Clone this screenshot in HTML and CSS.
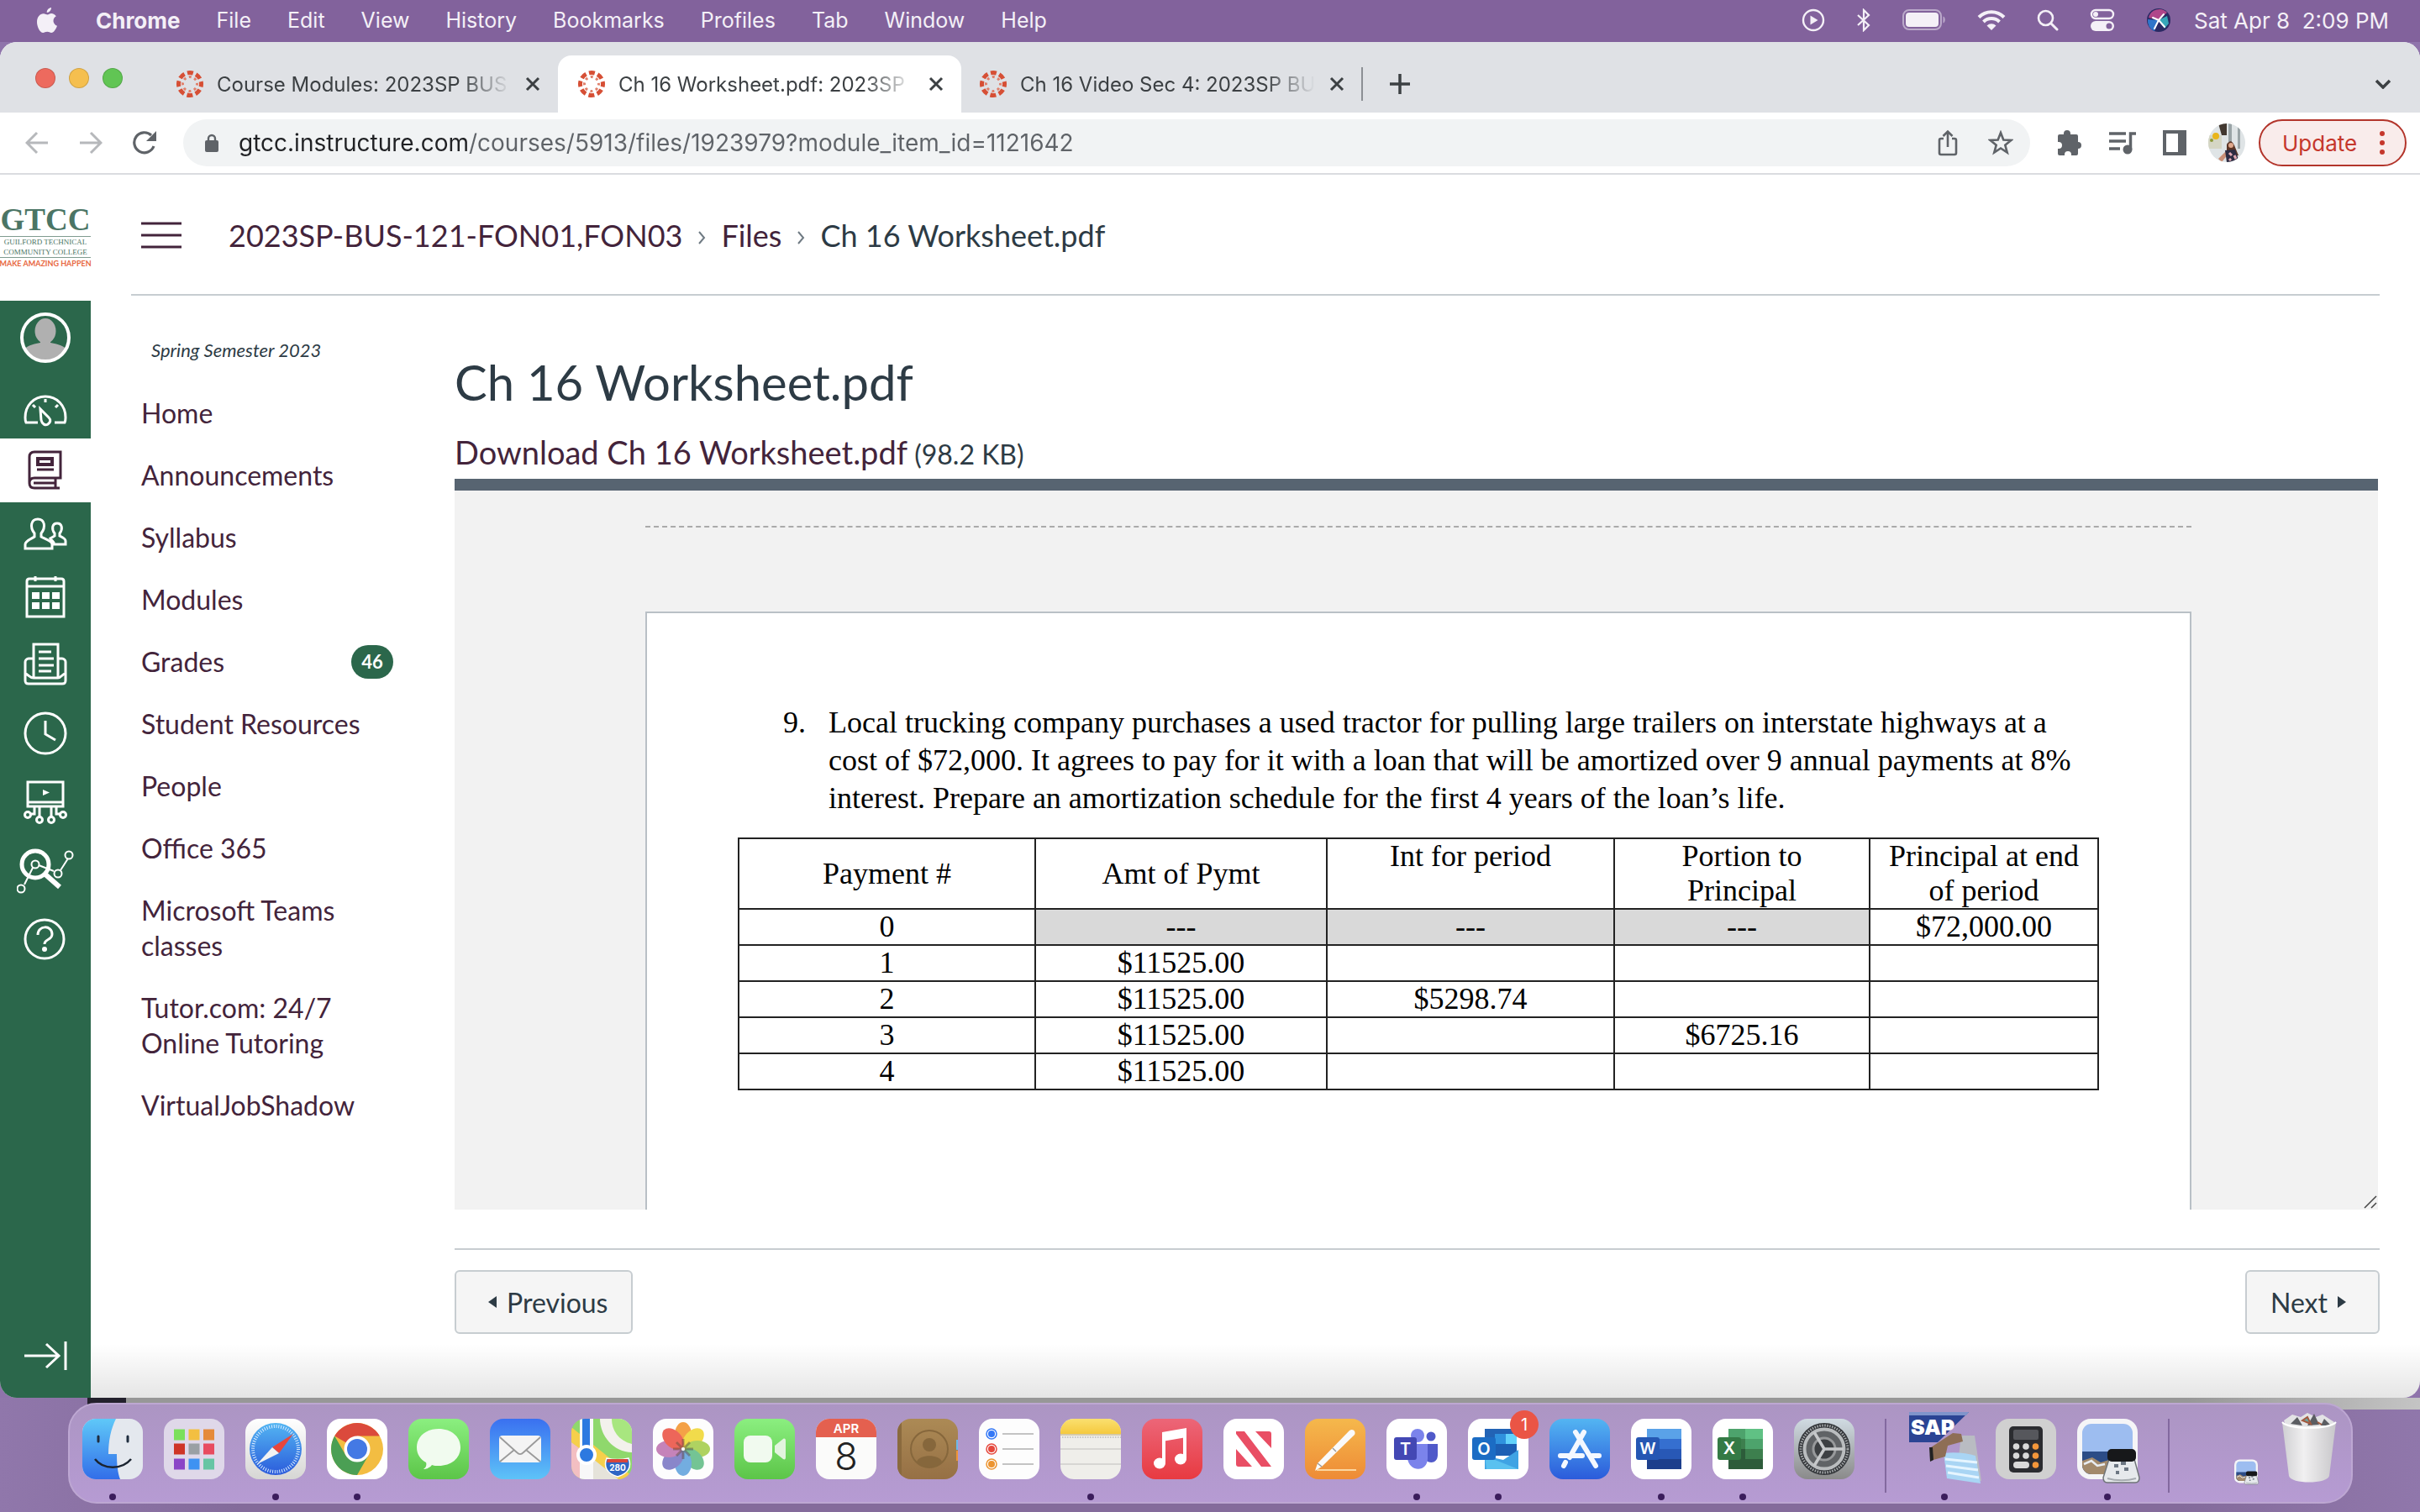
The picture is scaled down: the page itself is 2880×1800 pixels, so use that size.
FILE: index.html
```
<!DOCTYPE html>
<html lang="en">

<head>
  <meta charset="UTF-8">
  <meta name="viewport" content="width=device-width, initial-scale=1.0">
  <title>Ch 16 Worksheet.pdf: 2023SP BUS</title>
  <link rel="stylesheet" href="styles.css">
</head>

<body>
  <!-- Shared symbols and gradients -->
  <svg class="defs" width="0" height="0" aria-hidden="true">
    <symbol id="canvas" viewBox="0 0 32 32">
      <circle cx="16" cy="16" r="13.5" fill="none" stroke="#d64f35" stroke-width="5" stroke-dasharray="7 3.6" stroke-dashoffset="3.5"/>
      <circle cx="16" cy="16" r="8.5" fill="none" stroke="#e0806c" stroke-width="3" stroke-dasharray="3 3.676" stroke-dashoffset="1.5"/>
    </symbol>
    <symbol id="close" viewBox="0 0 20 20">
      <path d="M3 3l14 14M17 3L3 17" stroke="#3c4043" stroke-width="3" fill="none"/>
    </symbol>
    <linearGradient id="sky" x2="0" y2="1"><stop stop-color="#5fc8f8"/><stop offset="1" stop-color="#326ee9"/></linearGradient>
    <linearGradient id="blue" x2="0" y2="1"><stop stop-color="#3a70f0"/><stop offset="1" stop-color="#5ec3f8"/></linearGradient>
    <linearGradient id="store" x2="0" y2="1"><stop stop-color="#53b5f2"/><stop offset="1" stop-color="#2b5bdb"/></linearGradient>
    <linearGradient id="green" x2="0" y2="1"><stop stop-color="#8bef80"/><stop offset="1" stop-color="#5cc548"/></linearGradient>
    <linearGradient id="white" x2="0" y2="1"><stop stop-color="#ffffff"/><stop offset="1" stop-color="#d6d6d4"/></linearGradient>
    <linearGradient id="pink" x2="0" y2="1"><stop stop-color="#ec6678"/><stop offset="1" stop-color="#e83a41"/></linearGradient>
    <linearGradient id="orange" x2="0" y2="1"><stop stop-color="#f5b84c"/><stop offset="1" stop-color="#ee8b36"/></linearGradient>
    <linearGradient id="brown" x2="0" y2="1"><stop stop-color="#ac8a55"/><stop offset="1" stop-color="#967045"/></linearGradient>
    <linearGradient id="yellow" x2="0" y2="1"><stop stop-color="#fae070"/><stop offset="1" stop-color="#f5c93e"/></linearGradient>
    <linearGradient id="steel" x2="0" y2="1"><stop stop-color="#d0dbe2"/><stop offset="1" stop-color="#8a8a8a"/></linearGradient>
    <linearGradient id="bin" x2="1" y2="0"><stop stop-color="#cfcfd2"/><stop offset=".4" stop-color="#f1f0f1"/><stop offset="1" stop-color="#c8c7ca"/></linearGradient>
  </svg>

  <header class="menubar">
    <svg class="apple" viewBox="0 0 26 32"><path d="M18 1c.3 2.600-2.200 6-5.200 6C12.400 4.200 15 1.300 18 1zM18 8c2.400 0 4.600 1.300 5.800 3.200-5 3-4 9.600 1.200 11.600-1.400 4-4 8.200-6.800 8.200-2 0-2.700-1.200-5-1.200S10 31 8.200 31C4.500 31 1 23.800 1 18.200 1 12 4.700 8.300 8.700 8.300c2 0 3.700 1.300 4.900 1.300C14.700 9.600 16.200 8 18 8z" fill="currentColor"/></svg>
    <nav class="menus">
      <strong>Chrome</strong>
      <span>File</span>
      <span>Edit</span>
      <span>View</span>
      <span>History</span>
      <span>Bookmarks</span>
      <span>Profiles</span>
      <span>Tab</span>
      <span>Window</span>
      <span>Help</span>
    </nav>
    <div class="status">
      <svg width="28" height="28" viewBox="0 0 28 28"><circle cx="14" cy="14" r="12" fill="none" stroke="currentColor" stroke-width="2.400"/><path d="M10.500 8.500v11l9-5.500z" fill="currentColor"/></svg>
      <svg width="18" height="28" viewBox="0 0 18 28"><path d="M2 8l13 12-6 6V2l6 6L2 20" fill="none" stroke="currentColor" stroke-width="2.200"/></svg>
      <svg width="52" height="26" viewBox="0 0 52 26"><rect x="1" y="1" width="45" height="23" rx="7" fill="none" stroke="currentColor" stroke-opacity=".5" stroke-width="2"/><rect x="4" y="4" width="39" height="17" rx="4" fill="currentColor"/><path d="M48.500 8.500c3 1 3 7 0 8z" fill="currentColor" fill-opacity=".5"/></svg>
      <svg width="34" height="26" viewBox="0 0 34 26"><path d="M2 9.500a21 21 0 0 1 30 0M7.500 15a13.500 13.500 0 0 1 19 0" fill="none" stroke="currentColor" stroke-width="4"/><path d="M11.500 19.500a8 8 0 0 1 11 0L17 25z" fill="currentColor"/></svg>
      <svg width="26" height="26" viewBox="0 0 26 26"><circle cx="10.500" cy="10.500" r="8.500" fill="none" stroke="currentColor" stroke-width="2.600"/><path d="M17 17l7 7" stroke="currentColor" stroke-width="3" stroke-linecap="round"/></svg>
      <svg width="30" height="28" viewBox="0 0 30 28"><rect x="2" y="2" width="26" height="10" rx="5" fill="none" stroke="currentColor" stroke-width="2.400"/><circle cx="7" cy="7" r="3" fill="currentColor"/><rect x="1" y="15" width="28" height="12" rx="6" fill="currentColor"/><circle cx="23" cy="21" r="3.500" fill="#82629c"/></svg>
      <svg width="30" height="30" viewBox="0 0 30 30"><circle cx="15" cy="15" r="14" fill="#2b2a63"/><path d="M3 12A13 13 0 0 1 25 6L15 15z" fill="#b0468a"/><path d="M2 14a13 13 0 0 0 8 14l5-13z" fill="#2f75c9"/><path d="M15 15l10-5 2 9-5 6z" fill="#37a7b8"/><path d="M8 12l7 3 6-7M15 15l-5 10M15 15l7 8" fill="none" stroke="#fff" stroke-width="2" stroke-linecap="round"/></svg>
      <time>Sat Apr 8&nbsp; 2:09 PM</time>
    </div>
  </header>

  <div class="window">
    <div class="tabstrip">
      <div class="lights"><i class="red"></i><i class="amber"></i><i class="lime"></i></div>
      <div class="tab">
        <svg class="favicon"><use href="#canvas"/></svg>
        <span class="tab-title">Course Modules: 2023SP BUS</span>
        <button class="tab-close" aria-label="Close tab"><svg><use href="#close"/></svg></button>
      </div>
      <div class="tab active">
        <svg class="favicon"><use href="#canvas"/></svg>
        <span class="tab-title">Ch 16 Worksheet.pdf: 2023SP</span>
        <button class="tab-close" aria-label="Close tab"><svg><use href="#close"/></svg></button>
      </div>
      <div class="tab last">
        <svg class="favicon"><use href="#canvas"/></svg>
        <span class="tab-title">Ch 16 Video Sec 4: 2023SP BU</span>
        <button class="tab-close" aria-label="Close tab"><svg><use href="#close"/></svg></button>
      </div>
      <button class="new-tab" aria-label="New tab"><svg width="24" height="24" viewBox="0 0 24 24"><path d="M12 0v24M0 12h24" stroke="#3c4043" stroke-width="3.500"/></svg></button>
      <button class="tab-search" aria-label="Search tabs"><svg width="20" height="12" viewBox="0 0 20 12"><path d="M2 2l8 8 8-8" fill="none" stroke="#3c4043" stroke-width="3.500"/></svg></button>
    </div>

    <div class="toolbar">
      <div class="travel">
        <button aria-label="Back"><svg width="28" height="28" viewBox="0 0 28 28"><path d="M27 14H3M14 2L2 14l12 12" fill="none" stroke="#b6b8bb" stroke-width="3"/></svg></button>
        <button aria-label="Forward"><svg width="28" height="28" viewBox="0 0 28 28"><path d="M1 14h24M14 2l12 12-12 12" fill="none" stroke="#b6b8bb" stroke-width="3"/></svg></button>
        <button aria-label="Reload"><svg width="28" height="28" viewBox="0 0 28 28"><path d="M25 18a12 12 0 1 1-3-13" fill="none" stroke="#5f6368" stroke-width="3.200"/><path d="M28 0v12H16z" fill="#5f6368"/></svg></button>
      </div>
      <div class="omnibox">
        <svg width="18" height="22" viewBox="0 0 18 22"><rect x="1" y="8" width="16" height="14" rx="2" fill="#5f6368"/><path d="M5 9V6a4 4 0 0 1 8 0v3" fill="none" stroke="#5f6368" stroke-width="2.400"/></svg>
        <input class="url" aria-label="Address" value="gtcc.instructure.com/courses/5913/files/1923979?module_item_id=1121642">
        <button aria-label="Share"><svg width="24" height="32" viewBox="0 0 24 32"><path d="M7 11H4a2 2 0 0 0-2 2v15a2 2 0 0 0 2 2h16a2 2 0 0 0 2-2V13a2 2 0 0 0-2-2h-3M12 21V3M6.500 8L12 2.500 17.500 8" fill="none" stroke="#5f6368" stroke-width="2.600"/></svg></button>
        <button aria-label="Bookmark"><svg width="30" height="30" viewBox="0 0 30 30"><path d="M15 3l3.300 8.500 9.100.500-7.100 5.700 2.400 8.900L15 21.500l-7.700 5.100 2.400-8.900L2.600 12l9.100-.500z" fill="none" stroke="#5f6368" stroke-width="2.600"/></svg></button>
      </div>
      <button aria-label="Extensions"><svg width="30" height="32" viewBox="0 0 30 32"><path d="M8 5a4 4 0 0 1 8 0v1h7a2 2 0 0 1 2 2v7a4 4 0 0 1 0 8v6a2 2 0 0 1-2 2h-6v-1a4 4 0 0 0-8 0v1H3a2 2 0 0 1-2-2v-6h1a4 4 0 0 0 0-8H1V8a2 2 0 0 1 2-2h5z" fill="#5f6368"/></svg></button>
      <button aria-label="Media"><svg width="32" height="28" viewBox="0 0 32 28"><path d="M0 3h20M0 12h20M0 21h13" stroke="#5f6368" stroke-width="3.500"/><path d="M25.500 22V3H32" fill="none" stroke="#5f6368" stroke-width="3.500"/><circle cx="22" cy="22" r="5.500" fill="#5f6368"/></svg></button>
      <button aria-label="Side panel"><svg width="28" height="30" viewBox="0 0 28 30"><path fill-rule="evenodd" d="M0 0h28v30H0zM4 4v22h14V4z" fill="#5f6368"/></svg></button>
      <button class="profile" aria-label="Profile"><svg width="44" height="46" viewBox="0 0 44 46"><clipPath id="face"><ellipse cx="22" cy="23" rx="22" ry="23"/></clipPath><g clip-path="url(#face)"><rect width="44" height="46" fill="#dfe4e6"/><path d="M12 0h10v14H16z" fill="#423830"/><path d="M24 0h4v22h-4zM35 0h3v30h-3z" fill="#9aa4a7"/><path d="M0 14h16v16H0z" fill="#d5d6c4"/><circle cx="9" cy="15" r="4" fill="#e9b51b"/><circle cx="4" cy="20" r="2" fill="#8c9a3a"/><path d="M22 25q5-8 9 1l5 12-14 2z" fill="#5b3526"/><circle cx="27" cy="26" r="3" fill="#dfa88c"/><path d="M12 42l10-10 2 4-8 10z" fill="#c98f76"/><path d="M20 32l12-1 5 15H22z" fill="#2d2c42"/><path d="M25 35l3 3M31 38l2 4M25 42l2 2" stroke="#e2a9b2" stroke-width="3"/></g></svg></button>
      <button class="update">Update <svg width="6" height="28" viewBox="0 0 6 28"><path d="M3 3h0M3 14h0M3 25h0" stroke="currentColor" stroke-width="6" stroke-linecap="round"/></svg></button>
    </div>

    <div class="page">
      <aside class="rail">
        <a class="logo" href="#">
          <b>GTCC</b>
          <span>GUILFORD TECHNICAL<br>COMMUNITY COLLEGE</span>
          <em>MAKE AMAZING HAPPEN</em>
        </a>
        <nav class="rail-nav">
          <a href="#" class="user" aria-label="Account"><svg width="60" height="60" viewBox="0 0 60 60"><clipPath id="user"><circle cx="30" cy="30" r="27"/></clipPath><g clip-path="url(#user)" fill="#b0b0b0"><ellipse cx="30" cy="22" rx="12.500" ry="15"/><path d="M24 30h12v6c10 2 18 4 20 10v14H4V46c2-6 10-8 20-10z"/></g><circle cx="30" cy="30" r="28" fill="none" stroke="#fff" stroke-width="4"/></svg></a>
          <a href="#" aria-label="Dashboard"><svg viewBox="0 -4 52 52"><path d="M17 41H3c-1-2-1-4-1-6C2 21 12 10 26 10s24 11 24 25c0 2 0 4-1 6H37M26 13v4M11 20l3 3M41 20l-3 3M20 25l1 13c1 5 5 7 8 5s4-5 1-8z"/></svg></a>
          <a href="#" class="current" aria-label="Courses"><svg viewBox="0 0 52 52"><path d="M13 4h31v31H13c-4 0-6 2-6 5V10c0-4 2-6 6-6zM13 35c-4 0-6 2-6 6s2 6 6 6h30M12 41h26M38 35v12M16 25h20"/><path d="M17 12h17v7H17z" stroke-width="4"/></svg></a>
          <a href="#" aria-label="Groups"><svg viewBox="0 0 52 52"><path d="M2 43h32v-5c0-4-10-7-13-9v-4c6-8 4-17-4-17s-10 9-4 17v4c-3 2-11 5-11 9zM36 38h14v-4c0-3-5-5-7-6v-3c4-5 3-12-3-12s-7 7-3 12v3l-5 3 4 5z"/></svg></a>
          <a href="#" aria-label="Calendar"><svg viewBox="0 2 52 52"><path d="M4 50V8c0-2 1-3 3-3h38c2 0 3 1 3 3v42zM4 14h44M14 1v7M38 1v7"/><path d="M12 23h5v4h-5zM24 23h5v4h-5zM36 23h5v4h-5zM12 35h5v4h-5zM24 35h5v4h-5zM36 35h5v4h-5z" stroke-width="4"/></svg></a>
          <a href="#" aria-label="Inbox"><svg viewBox="0 0 52 52"><path d="M12 42V2h29v40M12 19H6c-2 0-4 2-4 4v22c0 3 1 4 4 4h40c3 0 4-1 4-4V23c0-2-2-4-4-4h-5M2 37c3 0 5 5 10 5h29c4 0 5-5 9-5M18 11h15M18 19h18M18 27h18M18 34h15"/></svg></a>
          <a href="#" aria-label="History"><svg viewBox="0 0 52 52"><circle cx="26" cy="26" r="24"/><path d="M26 11v16l12 7"/></svg></a>
          <a href="#" aria-label="Studio"><svg viewBox="0 0 52 52"><path d="M5 2h42v29H5zM6 26h40M13 32v8H8M19 32v12M33 32v12M39 32v8h5"/><circle cx="5" cy="41" r="3.500"/><circle cx="19" cy="47" r="3.500"/><circle cx="33" cy="47" r="3.500"/><circle cx="47" cy="41" r="3.500"/><path d="M23 11l8 3.500-8 3.500z" fill="#fff" stroke="none"/></svg></a>
          <a href="#" aria-label="Analytics"><svg class="wide" viewBox="0 0 68 54"><path d="M9 43L19 23M26 20l18 7M52 26l9-14"/><circle cx="5" cy="48" r="4.500"/><circle cx="22" cy="19" r="4.500"/><circle cx="49" cy="30" r="4.500"/><circle cx="62" cy="8" r="4.500"/><circle cx="22" cy="19" r="16" stroke-width="5"/><path d="M34 31l17 15" stroke-width="6"/></svg></a>
          <a href="#" aria-label="Help"><svg viewBox="0 0 52 52"><circle cx="25" cy="25" r="23"/><path d="M17 20c0-12 17-12 17-1 0 8-9 5-9 12"/><circle cx="25" cy="37" r="1.500" fill="#fff"/></svg></a>
          <a href="#" class="expand" aria-label="Expand navigation"><svg viewBox="0 0 52 52"><path d="M1 26h41M27 12l15 14-15 14M50 9v34"/></svg></a>
        </nav>
      </aside>

      <main class="main">
        <div class="crumbs">
          <button class="burger" aria-label="Toggle course navigation"><svg width="48" height="32" viewBox="0 0 48 32"><path d="M0 2h48M0 16h48M0 30h48" stroke="#43243b" stroke-width="3"/></svg></button>
          <a href="#">2023SP-BUS-121-FON01,FON03</a>
          <svg class="chev" viewBox="0 0 10 16"><path d="M2 1l6 7-6 7" fill="none" stroke="#6f7a83" stroke-width="2"/></svg>
          <a href="#">Files</a>
          <svg class="chev" viewBox="0 0 10 16"><path d="M2 1l6 7-6 7" fill="none" stroke="#6f7a83" stroke-width="2"/></svg>
          <span>Ch 16 Worksheet.pdf</span>
        </div>

        <div class="columns">
          <nav class="course-nav">
            <p class="term">Spring Semester 2023</p>
            <a href="#">Home</a>
            <a href="#">Announcements</a>
            <a href="#">Syllabus</a>
            <a href="#">Modules</a>
            <a href="#">Grades <b class="badge">46</b></a>
            <a href="#">Student Resources</a>
            <a href="#">People</a>
            <a href="#">Office 365</a>
            <a href="#">Microsoft Teams classes</a>
            <a href="#">Tutor.com: 24/7 Online Tutoring</a>
            <a href="#">VirtualJobShadow</a>
          </nav>

          <section class="content">
            <h1>Ch 16 Worksheet.pdf</h1>
            <p class="download"><a href="#">Download Ch 16 Worksheet.pdf</a> (98.2 KB)</p>

            <div class="viewer">
              <div class="page-break"></div>
              <article class="sheet">
                <div class="question">
                  <span>9.</span>
                  <p>Local trucking company purchases a used tractor for pulling large trailers on interstate highways at a cost of $72,000. It agrees to pay for it with a loan that will be amortized over 9 annual payments at 8% interest. Prepare an amortization schedule for the first 4 years of the loan’s life.</p>
                </div>
                <table>
                  <thead>
                    <tr>
                      <th class="c1">Payment #</th>
                      <th class="c2">Amt of Pymt</th>
                      <th class="c3">Int for period</th>
                      <th class="c4">Portion to Principal</th>
                      <th class="c5">Principal at end of period</th>
                    </tr>
                  </thead>
                  <tbody>
                    <tr><td>0</td><td class="na">---</td><td class="na">---</td><td class="na">---</td><td>$72,000.00</td></tr>
                    <tr><td>1</td><td>$11525.00</td><td></td><td></td><td></td></tr>
                    <tr><td>2</td><td>$11525.00</td><td>$5298.74</td><td></td><td></td></tr>
                    <tr><td>3</td><td>$11525.00</td><td></td><td>$6725.16</td><td></td></tr>
                    <tr><td>4</td><td>$11525.00</td><td></td><td></td><td></td></tr>
                  </tbody>
                </table>
              </article>
              <svg class="grip" width="16" height="16" viewBox="0 0 16 16"><path d="M1 15L15 1M9 15l6-6" stroke="#444" stroke-width="1.500"/></svg>
            </div>

            <div class="pager">
              <button><svg width="10" height="14" viewBox="0 0 10 14"><path d="M10 0v14L0 7z" fill="currentColor"/></svg>Previous</button>
              <button>Next<svg width="10" height="14" viewBox="0 0 10 14"><path d="M0 0v14l10-7z" fill="currentColor"/></svg></button>
            </div>
          </section>
        </div>
      </main>
    </div>
  </div>

  <footer class="dock-area">
    <nav class="dock">
      <button class="app open" aria-label="Finder"><svg viewBox="0 0 72 72"><path d="M0 0h72v72H0z" fill="#e4e8ee"/><path d="M0 0h40c-6 12-9 26-9 42h10c0 12 1 22 4 30H0z" fill="url(#sky)"/><path d="M19 21v6M54 21v6" stroke="#1f2d3f" stroke-width="3" stroke-linecap="round"/><path d="M15 48c10 13 32 13 43 0" fill="none" stroke="#1b2430" stroke-width="2.500"/></svg></button>
      <button class="app" aria-label="Launchpad"><svg viewBox="0 0 72 72"><path d="M0 0h72v72H0z" fill="#dfd8e9"/><g stroke-width="13"><path d="M12 19h13" stroke="#7be05b"/><path d="M29.500 19h13" stroke="#f3bf41"/><path d="M47 19h13" stroke="#e58a3a"/><path d="M12 36h13" stroke="#ce3527"/><path d="M29.500 36h13" stroke="#9aa0a4"/><path d="M47 36h13" stroke="#e84c60"/><path d="M12 54h13" stroke="#8a45c7"/><path d="M29.500 54h13" stroke="#3f92f2"/><path d="M47 54h13" stroke="#66c5a4"/></g></svg></button>
      <button class="app open" aria-label="Safari"><svg viewBox="0 0 72 72"><path d="M0 0h72v72H0z" fill="url(#white)"/><circle cx="36" cy="36" r="31" fill="url(#store)"/><circle cx="36" cy="36" r="27" fill="none" stroke="#d7ebff" stroke-width="4" stroke-dasharray="1 1.830"/><path d="M57 18L40 41l-8-7z" fill="#e8463c"/><path d="M32 34l8 7-26 13z" fill="#f2f2f2"/></svg></button>
      <button class="app open" aria-label="Chrome"><svg viewBox="0 0 72 72"><path d="M0 0h72v72H0z" fill="#fff"/><circle cx="36" cy="36" r="31" fill="#f3bd42"/><path d="M36 36L9.200 20.500A31 31 0 0 1 62.800 20.500H36z" fill="#db4a3c"/><path d="M9.200 20.500A31 31 0 0 0 36 67l13.400-23.200L36 36l-13.400 7.800z" fill="#4b9f54"/><circle cx="36" cy="36" r="15.500" fill="#fff"/><circle cx="36" cy="36" r="12" fill="#4479e4"/></svg></button>
      <button class="app" aria-label="Messages"><svg viewBox="0 0 72 72"><path d="M0 0h72v72H0z" fill="url(#green)"/><path d="M36 12c15 0 26 9 26 22S51 56 36 56c-3 0-6 0-8-1-2 3-6 5-10 5 3-2 4-5 3-8-7-4-11-10-11-18 0-13 11-22 26-22z" fill="#f1fbef"/></svg></button>
      <button class="app" aria-label="Mail"><svg viewBox="0 0 72 72"><path d="M0 0h72v72H0z" fill="url(#blue)"/><rect x="11" y="20" width="50" height="32" rx="4" fill="#f4f4f4"/><path d="M12 22l20 18c3 3 5 3 8 0l20-18M12 51l17-14M60 51L43 37" fill="none" stroke="#9a9a9a" stroke-width="1.800"/></svg></button>
      <button class="app" aria-label="Maps"><svg viewBox="0 0 72 72"><path d="M0 0h72v72H0z" fill="#8fd86c"/><path d="M34 0h38v40C50 40 34 20 34 0z" fill="#f3f1ec"/><path d="M48 0h24v30C56 26 48 14 48 0z" fill="#a8e67f"/><path d="M0 10l72 58v4H54L0 28z" fill="#f6cf4b"/><path d="M0 28l12 9v35H0z" fill="#f3bfc2"/><path d="M26 48l30 24H26z" fill="#e5e3da"/><path d="M10 0h16v72H10z" fill="#f8f8f8"/><path d="M13 0h9v34h-9z" fill="#2d79e0"/><circle cx="18" cy="43" r="10" fill="#2d79e0" stroke="#fff" stroke-width="4"/><path d="M42 47c8 2 18 2 26 0 4 10 0 18-13 22-13-4-17-12-13-22z" fill="#2f66c4" stroke="#fff" stroke-width="1.500"/><path d="M43 48h24v4H42z" fill="#d8453b"/><text x="55" y="62" font-size="10" font-weight="700" text-anchor="middle" fill="#fff">280</text></svg></button>
      <button class="app" aria-label="Photos"><svg viewBox="0 0 72 72"><path d="M0 0h72v72H0z" fill="#fdfdfd"/><g opacity=".92"><ellipse cx="36" cy="19" rx="10" ry="15" fill="#f39a38"/><ellipse cx="36" cy="19" rx="10" ry="15" fill="#f0d83c" transform="rotate(45 36 36)"/><ellipse cx="36" cy="19" rx="10" ry="15" fill="#a9cf54" transform="rotate(90 36 36)"/><ellipse cx="36" cy="19" rx="10" ry="15" fill="#69bf8b" transform="rotate(135 36 36)"/><ellipse cx="36" cy="19" rx="10" ry="15" fill="#68a6de" transform="rotate(180 36 36)"/><ellipse cx="36" cy="19" rx="10" ry="15" fill="#7f7cc6" transform="rotate(225 36 36)"/><ellipse cx="36" cy="19" rx="10" ry="15" fill="#c079b3" transform="rotate(270 36 36)"/><ellipse cx="36" cy="19" rx="10" ry="15" fill="#ec5a4c" transform="rotate(315 36 36)"/></g><path d="M36 36V24M36 36l8-8M36 36h12M36 36l8 8M36 36v12M36 36l-8 8M36 36H24M36 36l-8-8" stroke="#5c4a3a" stroke-opacity=".45" stroke-width="3"/><circle cx="36" cy="36" r="2" fill="#fff"/></svg></button>
      <button class="app" aria-label="FaceTime"><svg viewBox="0 0 72 72"><path d="M0 0h72v72H0z" fill="url(#green)"/><rect x="11" y="20" width="34" height="32" rx="8" fill="#f1faef"/><path d="M48 32l10-8c2-1 3 0 3 2v20c0 2-1 3-3 2l-10-8z" fill="#e2f4de"/></svg></button>
      <button class="app" aria-label="Calendar"><svg viewBox="0 0 72 72"><path d="M0 0h72v72H0z" fill="#fbfbfa"/><path d="M0 0h72v22H0z" fill="#e4604f"/><text x="36" y="17" font-size="15" font-weight="600" text-anchor="middle" fill="#fff">APR</text><text x="36" y="61" font-size="45" font-weight="300" text-anchor="middle" fill="#222">8</text></svg></button>
      <button class="app" aria-label="Contacts"><svg viewBox="0 0 72 72"><path d="M0 0h72v72H0z" fill="url(#brown)"/><path d="M0 0h5v72H0z" fill="#8a6a3e"/><circle cx="38" cy="36" r="22" fill="none" stroke="#86673c" stroke-width="2"/><circle cx="38" cy="31" r="8" fill="#86673c"/><path d="M23 51c3-9 27-9 30 0-8 9-22 9-30 0z" fill="#86673c"/><path d="M70 25h2v12h-2z" fill="#6db9e8"/><path d="M70 38h2v12h-2z" fill="#ef9436"/></svg></button>
      <button class="app" aria-label="Reminders"><svg viewBox="0 0 72 72"><path d="M0 0h72v72H0z" fill="#fdfdfd"/><path d="M28 18h37M28 36h37M28 54h37" stroke="#c3c3c3" stroke-width="2"/><g stroke-width="1.500"><circle cx="15" cy="18" r="4" fill="#3478f6"/><circle cx="15" cy="18" r="6" fill="none" stroke="#3478f6"/><circle cx="15" cy="36" r="4" fill="#e5483d"/><circle cx="15" cy="36" r="6" fill="none" stroke="#e5483d"/><circle cx="15" cy="54" r="4" fill="#ec9430"/><circle cx="15" cy="54" r="6" fill="none" stroke="#ec9430"/></g></svg></button>
      <button class="app open" aria-label="Notes"><svg viewBox="0 0 72 72"><path d="M0 0h72v72H0z" fill="#efeeea"/><path d="M0 0h72v18H0z" fill="url(#yellow)"/><path d="M0 36h72M0 54h72" stroke="#cfcecb" stroke-width="1.500"/><path d="M0 19h72" stroke="#b9a66a"/><path d="M2 22h70" stroke="#bbb" stroke-width="1.500" stroke-dasharray="1.500 1.500"/></svg></button>
      <button class="app" aria-label="Music"><svg viewBox="0 0 72 72"><path d="M0 0h72v72H0z" fill="url(#pink)"/><path d="M51 12v35M26 17v35" fill="none" stroke="#fff" stroke-width="4"/><path d="M24 16l29-5v11l-29 5z" fill="#fff"/><ellipse cx="21" cy="53" rx="7" ry="6.500" fill="#fff"/><ellipse cx="46" cy="48" rx="7" ry="6.500" fill="#fff"/></svg></button>
      <button class="app" aria-label="News"><svg viewBox="0 0 72 72"><path d="M0 0h72v72H0z" fill="#fff"/><path d="M15 15h10l32 42H45L15 18z M38 15h16a3 3 0 0 1 3 3v17zM15 36l19 21H18a3 3 0 0 1-3-3z" fill="#e94e64"/></svg></button>
      <button class="app" aria-label="Pages"><svg viewBox="0 0 72 72"><path d="M0 0h72v72H0z" fill="url(#orange)"/><path d="M53 14c4-3 8 1 6 5L20 57l-8 5 3-9z" fill="#fafafa"/><path d="M15 53l5 4M33 35l4 4" stroke="#999" stroke-width="1.500"/><path d="M14 61h47" stroke="#fbd6a0" stroke-width="2"/></svg></button>
      <button class="app open" aria-label="Teams"><svg viewBox="0 0 72 72"><path d="M0 0h72v72H0z" fill="#fff"/><circle cx="37" cy="20" r="8" fill="#7b83eb"/><circle cx="53" cy="21" r="5.500" fill="#5059c9"/><path d="M44 30h17v13c0 12-15 12-17 0z" fill="#5059c9"/><path d="M25 30h24v17c0 17-22 17-24 0z" fill="#7b83eb"/><rect x="9" y="22" width="27" height="27" rx="3" fill="#4348b4"/><text x="22.500" y="43" font-size="20" font-weight="600" text-anchor="middle" fill="#fff">T</text></svg></button>
      <button class="app open" aria-label="Outlook"><svg viewBox="0 0 72 72"><path d="M0 0h72v72H0z" fill="#fff"/><path d="M20 12h38v26H20z" fill="#2263b5"/><path d="M32 18h13v12H32z" fill="#2f92de"/><path d="M45 18h13v12H45z" fill="#62d2fb"/><path d="M32 30h26v14H32z" fill="#1c5fb4"/><path d="M20 60V44l22 5 18-12v23z" fill="#3fa3e4"/><path d="M20 44l40 16H22z" fill="#5ac1f0"/><rect x="5" y="22" width="28" height="27" rx="3" fill="#1b6cc4"/><text x="19" y="43" font-size="20" font-weight="600" text-anchor="middle" fill="#fff">O</text></svg><span class="count">1</span></button>
      <button class="app" aria-label="App Store"><svg viewBox="0 0 72 72"><path d="M0 0h72v72H0z" fill="url(#store)"/><path d="M41 16L24 46M31 16l24 40M13 44h26M51 44h8M19 52l-2 4" stroke="#f4f8ff" stroke-width="6" stroke-linecap="round"/></svg></button>
      <button class="app open" aria-label="Word"><svg viewBox="0 0 72 72"><path d="M0 0h72v72H0z" fill="#fff"/><path d="M19 12h41v12H19z" fill="#5aa2e8"/><path d="M19 24h41v12H19z" fill="#356fd0"/><path d="M19 36h41v12H19z" fill="#2858b6"/><path d="M19 48h41v12H19z" fill="#1d3f8c"/><rect x="6" y="22" width="28" height="27" rx="3" fill="#2557b3"/><text x="20" y="42" font-size="19" font-weight="600" text-anchor="middle" fill="#fff">W</text></svg></button>
      <button class="app open" aria-label="Excel"><svg viewBox="0 0 72 72"><path d="M0 0h72v72H0z" fill="#fff"/><path d="M19 12h20v12H19z" fill="#4da36c"/><path d="M39 12h21v12H39z" fill="#60c184"/><path d="M19 24h20v12H19z" fill="#3d7f4e"/><path d="M39 24h21v12H39z" fill="#4da36c"/><path d="M19 36h20v24H19z" fill="#2d5c3a"/><path d="M39 36h21v12H39z" fill="#3d7f4e"/><path d="M39 48h21v12H39z" fill="#2d5c3a"/><rect x="6" y="22" width="28" height="27" rx="3" fill="#347a45"/><text x="20" y="42" font-size="20" font-weight="600" text-anchor="middle" fill="#fff">X</text></svg></button>
      <button class="app" aria-label="System Preferences"><svg viewBox="0 0 72 72"><path d="M0 0h72v72H0z" fill="url(#steel)"/><circle cx="36" cy="36" r="31" fill="#33363a"/><circle cx="36" cy="36" r="28" fill="none" stroke="#a5a8aa" stroke-width="3" stroke-dasharray="1.500 1.500"/><circle cx="36" cy="36" r="23.500" fill="#606366" stroke="#b9bcbe" stroke-width="4"/><circle cx="36" cy="36" r="13" fill="#3d4043" stroke="#97999b" stroke-width="3"/><path d="M36 36h23M36 36L24 16M36 36L24 56" stroke="#c6c8ca" stroke-width="3.500"/></svg></button>
      <i class="divider"></i>
      <button class="app bare open" aria-label="SAP"><svg viewBox="-4 0 72 72"><path d="M-10 -8h71L24 28h-34z" fill="#2b4494"/><path d="M-10 -8h71l-3 4h-68z" fill="#7f94cb"/><text x="-8" y="19" font-size="25" font-weight="900" fill="#fff">SAP</text><path d="M52 20h16l8 54-30-5z" fill="#b9bcc2"/><path d="M31 41c14-2 28 0 38 3l6 33-40-6z" fill="#a9d5f4"/><path d="M33 48l38 4M34 56l38 5M36 64l37 6" stroke="#e6f5ff" stroke-width="3"/><path d="M16 34l26-17 10 1 2 9-18 5-3 13-18 5z" fill="#8e6e55"/><path d="M14 34l4 0 1 15-4 2z" fill="#222"/></svg></button>
      <button class="app" aria-label="Calculator"><svg viewBox="0 0 72 72"><path d="M0 0h72v72H0z" fill="#d0d0d0"/><rect x="16" y="9" width="40" height="55" rx="5" fill="#2b2c30"/><rect x="21" y="13" width="30" height="12" rx="2" fill="#56575c"/><g fill="#d9d9d9"><circle cx="24.500" cy="33" r="3.800"/><circle cx="36" cy="33" r="3.800"/><circle cx="24.500" cy="44" r="3.800"/><circle cx="36" cy="44" r="3.800"/><rect x="21" y="51" width="19" height="8" rx="4"/></g><g fill="#f2963a"><circle cx="47.500" cy="33" r="3.800"/><circle cx="47.500" cy="44" r="3.800"/><circle cx="47.500" cy="55" r="3.800"/></g></svg></button>
      <button class="app bare open" aria-label="Preview"><svg viewBox="0 0 72 72"><g id="photo"><rect width="72" height="72" rx="16" fill="#f5f5f7"/><rect x="6" y="6" width="60" height="60" rx="11" fill="#9dbdf0"/><path d="M6 39h60v16a11 11 0 0 1-11 11H17A11 11 0 0 1 6 55z" fill="#2c4c86"/><path d="M6 50l12-4 10 6 10-3 8 5-6 12H17A11 11 0 0 1 6 55z" fill="#a38a6c"/><path d="M8 54l9-4 7 6 9-2" fill="none" stroke="#e8edf2" stroke-width="2.500"/><path d="M38 48h30l6 22c0 4-2 6-5 6H36c-3 0-5-2-5-6z" fill="#e6e9ec" stroke="#6f7478" stroke-width="1.500"/><path d="M44 56h5M52 53h6M56 60h5M46 64h4" stroke="#6c7682" stroke-width="4"/><path d="M36 71c10 3 24 3 34 0" fill="none" stroke="#a6abb0" stroke-width="2"/><rect x="36" y="36" width="34" height="15" rx="5" fill="#17181a"/></g></svg></button>
      <i class="divider"></i>
      <button class="app bare mini" aria-label="Minimised window"><svg viewBox="0 0 72 80"><use href="#photo"/></svg></button>
      <button class="app bare" aria-label="Trash"><svg viewBox="0 0 72 72"><path d="M6 2l10-7 10 3 8-5 10 5 8-3 14 9-4 10H10z" fill="#e3e3e5"/><path d="M14 6l8-8 6 10zM34 8l8-14 6 13zM50 8l4-8 8 8z" fill="#5b5d62"/><path d="M28 2l6-4 4 8zM46 4l5 3" fill="#6aa3a0" stroke="#a2593f" stroke-width="2"/><path d="M4 4c8 9 56 9 64 0L60 68c-2 10-46 10-48 0z" fill="url(#bin)"/><path d="M4 4c8 9 56 9 64 0" fill="none" stroke="#fff" stroke-width="2"/></svg></button>
    </nav>
  </footer>
</body>

</html>
```
FILE: styles.css
```
* {
  box-sizing: border-box;
}

body {
  margin: 0;
  min-height: 100vh;
  display: flex;
  flex-direction: column;
  background: #8f74ab;
  font-family: Inter, "Liberation Sans", sans-serif;
}

button {
  border: 0;
  padding: 0;
  background: none;
  font: inherit;
  color: inherit;
}

a {
  color: inherit;
  text-decoration: none;
}

svg {
  display: block;
  flex-shrink: 0;
}

.defs {
  position: absolute;
}

/* Menu bar */
.menubar {
  height: 50px;
  padding: 0 37px 2px 43px;
  display: flex;
  align-items: center;
  background: #82629c;
  color: #f4f0f7;
  font-size: 25px;
}

.apple {
  width: 26px;
  height: 32px;
  margin-right: 45px;
}

.menus {
  display: flex;
  align-items: center;
  gap: 43px;
}

.menus strong,
.status time {
  font-size: 26px;
}

.status {
  margin-left: auto;
  display: flex;
  align-items: center;
  gap: 37px;
}

.status time {
  margin-left: -10px;
}

/* Browser window */
.window {
  flex: 1;
  display: flex;
  flex-direction: column;
  border-radius: 20px;
  overflow: hidden;
  background: #fff;
}

.tabstrip {
  height: 84px;
  padding: 16px 34px 0 42px;
  display: flex;
  align-items: center;
  background: #dfe1e5;
  color: #3c4043;
  font-size: 24px;
}

.lights {
  width: 144px;
  display: flex;
  gap: 16px;
  padding-bottom: 14px;
}

.lights i {
  width: 24px;
  height: 24px;
  border-radius: 50%;
  border: 1px solid rgb(0 0 0 / 15%);
}

.red {
  background: #ed6a5e;
}

.amber {
  background: #f5bf4f;
}

.lime {
  background: #61c554;
}

.tab {
  width: 478px;
  height: 68px;
  padding: 0 20px 0 24px;
  display: flex;
  align-items: center;
  gap: 16px;
}

.tab.active {
  width: 480px;
  border-radius: 16px 16px 0 0;
  background: #fff;
}

.tab.last {
  height: 40px;
  padding-left: 22px;
  border-right: 2px solid #8c8f94;
}

.favicon {
  width: 32px;
  height: 32px;
}

.tab-title {
  flex: 1;
  white-space: nowrap;
  mask-image: linear-gradient(90deg, #000 calc(100% - 60px), transparent);
}

.tab-close svg {
  width: 20px;
  height: 20px;
}

.new-tab {
  margin-left: 32px;
}

.tab-search {
  margin-left: auto;
}

.toolbar {
  height: 74px;
  padding: 0 16px 0 30px;
  display: flex;
  align-items: center;
  gap: 32px;
  border-bottom: 2px solid #dadce0;
  font-size: 26px;
}

.travel {
  display: flex;
  gap: 36px;
}

.omnibox {
  flex: 1;
  height: 56px;
  padding: 0 20px 0 25px;
  display: flex;
  align-items: center;
  gap: 36px;
  border-radius: 28px;
  background: #f1f3f4;
}

.url {
  flex: 1;
  margin-left: -13px;
  border: 0;
  padding: 0;
  outline: 0;
  font-family: inherit;
  font-size: 28px;
  color: transparent;
  background: linear-gradient(90deg, #202124 275px, #5f6368 275px);
  background-clip: text;
}

.profile {
  margin: 0 -16px 0 -6px;
}

.update {
  width: 176px;
  height: 56px;
  padding: 0 24px 0 26px;
  display: flex;
  align-items: center;
  justify-content: space-between;
  border: 2px solid #b3352b;
  border-radius: 28px;
  background: #f9eceb;
  color: #c5372c;
}

/* Global navigation rail */
.page {
  flex: 1;
  display: flex;
  font-family: Lato, sans-serif;
  color: #2d3b45;
  background: linear-gradient(0deg, rgb(0 0 0 / 10%), transparent 64px);
}

.rail {
  width: 108px;
  flex-shrink: 0;
  display: flex;
  flex-direction: column;
}

.logo {
  height: 150px;
  padding-top: 35px;
  display: flex;
  flex-direction: column;
  align-items: center;
  white-space: nowrap;
  text-align: center;
  color: #4b7565;
  font-family: "Liberation Serif", serif;
}

.logo b {
  font-size: 37px;
  line-height: 38px;
}

.logo span {
  width: 108px;
  border: solid #7f9b90;
  border-width: 1px 0;
  font-size: 9px;
  line-height: 12px;
}

.logo em {
  font: 700 9px/14px Lato, sans-serif;
  color: #e8683f;
}

.rail-nav {
  flex: 1;
  display: flex;
  flex-direction: column;
  background: #2b674b;
}

.rail-nav a {
  height: 82px;
  display: flex;
  align-items: center;
  justify-content: center;
}

.rail-nav a:nth-child(-n+5) {
  height: 76px;
}

.rail-nav a.user:first-child {
  height: 88px;
}

.rail-nav svg {
  width: 52px;
  height: 52px;
  fill: none;
  stroke: #fff;
  stroke-width: 3;
}

.rail-nav .user svg {
  width: 60px;
  height: 60px;
  stroke: none;
}

.rail-nav .wide {
  width: 68px;
  height: 54px;
  stroke-width: 2;
}

.rail-nav .current {
  background: #fff;
}

.rail-nav .current svg {
  stroke: #43243b;
}

.rail-nav .expand {
  height: 100px;
  margin-top: auto;
}

/* Course page */
.main {
  flex: 1;
  display: flex;
  flex-direction: column;
  padding: 0 48px;
}

.crumbs {
  height: 144px;
  padding: 2px 0 0 12px;
  display: flex;
  align-items: center;
  border-bottom: 2px solid #c7cdd1;
  font-size: 36px;
}

.crumbs a,
.download a {
  color: #43243b;
}

.burger {
  margin-right: 56px;
}

.chev {
  width: 10px;
  height: 16px;
  margin: 6px 18px 0;
}

.columns {
  flex: 1;
  display: flex;
}

.course-nav {
  width: 385px;
  flex-shrink: 0;
  padding: 49px 73px 0 12px;
  font-size: 32px;
  line-height: 42px;
  color: #43243b;
}

.term {
  margin: 0 0 22px;
  padding-left: 12px;
  font-size: 22px;
  line-height: 32px;
  font-style: italic;
  color: #2d3b45;
}

.course-nav a {
  display: flex;
  align-items: center;
  justify-content: space-between;
  padding: 16px 0;
}

.badge {
  width: 50px;
  border-radius: 20px;
  background: #2b674b;
  color: #fff;
  font-size: 22px;
  line-height: 40px;
  text-align: center;
}

.content {
  flex: 1;
  display: flex;
  flex-direction: column;
  padding: 67px 0 76px;
}

h1 {
  margin: 0;
  font-size: 58px;
  line-height: 72px;
  font-weight: 400;
}

.download {
  margin: 22px 0 4px;
  font-size: 32px;
  line-height: 50px;
}

.download a {
  font-size: 38px;
}

.viewer {
  position: relative;
  flex: 1;
  display: flex;
  flex-direction: column;
  margin-right: 2px;
  padding: 42px 222px 0 227px;
  border-top: 14px solid #576471;
  background: #f2f2f2;
}

.page-break {
  border-top: 2px dashed #aaa;
}

.sheet {
  flex: 1;
  margin-top: 100px;
  padding: 108px 108px 0;
  border: 2px solid #b9c0c6;
  border-bottom: 0;
  background: #fff;
  color: #000;
  font-family: "Liberation Serif", serif;
  font-size: 36px;
}

.question {
  display: flex;
  gap: 27px;
  padding: 0 20px 0 54px;
  line-height: 45px;
}

.question p {
  max-width: 1500px;
  margin: 0 0 24px;
}

table {
  width: 100%;
  border-collapse: collapse;
  table-layout: fixed;
  text-align: center;
  line-height: 41px;
}

th,
td {
  height: 43px;
  padding: 0 12px;
  border: 2px solid #222;
  font-weight: 400;
}

.c1 {
  width: 353px;
}

.c2 {
  width: 347px;
}

.c3 {
  width: 342px;
  vertical-align: top;
}

.c4 {
  width: 304px;
  padding: 0 60px;
}

.na {
  background: #d9d9d9;
}

.grip {
  position: absolute;
  right: 1px;
  bottom: 1px;
}

.pager {
  margin-top: 46px;
  padding-top: 24px;
  display: flex;
  justify-content: space-between;
  border-top: 2px solid #c7cdd1;
  font-size: 32px;
}

.pager button {
  height: 76px;
  padding: 0 28px;
  display: flex;
  align-items: center;
  gap: 12px;
  border: 2px solid #c7cdd1;
  border-radius: 6px;
  background: #f5f5f5;
}

.pager button:first-child {
  padding-left: 38px;
}

.pager button:last-child {
  padding-right: 38px;
}

/* Dock */
.dock-area {
  position: relative;
  padding: 6px 80px 10px 81px;
  background: linear-gradient(90deg, #9077ab, #846b9b 10%, #846b9b 90%, #9077ab);
}

/* A second window peeking out behind the dock */
.dock-area::before {
  content: "";
  position: absolute;
  inset: 0 0 auto 104px;
  height: 14px;
  background: linear-gradient(90deg, #23202c 46px, #979797 46px, #979797 90%, #c4c4c4);
}

.dock {
  position: relative;
  height: 120px;
  padding: 17px 14px 0 15px;
  display: flex;
  align-items: flex-start;
  gap: 25px;
  border: 2px solid #bda7d2;
  border-radius: 34px;
  background: linear-gradient(#ac95c3, #b69bd3);
}

.app {
  position: relative;
  width: 72px;
  display: flex;
  flex-direction: column;
  align-items: center;
  gap: 17px;
}

.app svg {
  width: 72px;
  height: 72px;
  border-radius: 16px;
}

.app text {
  font-family: Inter, sans-serif;
}

.app.bare svg {
  border-radius: 0;
  overflow: visible;
}

.app.mini {
  width: 28px;
  margin: 48px 0 0 auto;
}

.app.mini svg {
  width: 28px;
  height: 32px;
}

.app.open::after {
  content: "";
  width: 8px;
  height: 8px;
  border-radius: 50%;
  background: #3b1d5c;
}

.count {
  position: absolute;
  top: -10px;
  right: -12px;
  width: 34px;
  border-radius: 50%;
  background: #ea5545;
  color: #fff;
  font-size: 20px;
  line-height: 34px;
}

.divider {
  width: 2px;
  height: 88px;
  margin: 0 8px 0 11px;
  background: #83699f;
}
```
